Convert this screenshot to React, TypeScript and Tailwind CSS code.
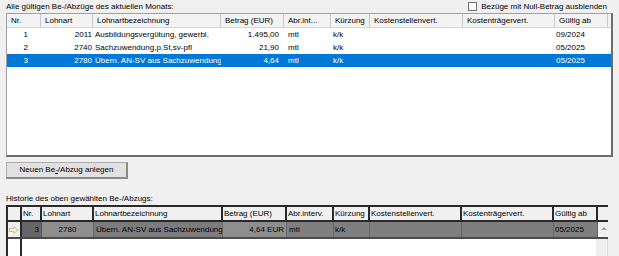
import React from "react";

const font = { fontFamily: '"Liberation Sans", Arial, sans-serif' };

const topCols = [
  { label: "Nr.", w: "w-[34px]" },
  { label: "Lohnart", w: "w-[52px]" },
  { label: "Lohnartbezeichnung", w: "w-[128px]" },
  { label: "Betrag (EUR)", w: "w-[63px]" },
  { label: "Abr.int...", w: "w-[47px]" },
  { label: "Kürzung", w: "w-[39px]" },
  { label: "Kostenstellenvert.", w: "w-[93px]" },
  { label: "Kostenträgervert.", w: "w-[92px]" },
  { label: "Gültig ab", w: "w-[53px]" },
];

const rows = [
  { nr: "1", la: "2011", bez: "Ausbildungsvergütung, gewerbl.", betrag: "1.495,00", abr: "mtl", kz: "k/k", ab: "09/2024" },
  { nr: "2", la: "2740", bez: "Sachzuwendung,p.St,sv-pfl", betrag: "21,90", abr: "mtl", kz: "k/k", ab: "05/2025" },
  { nr: "3", la: "2780", bez: "Übern. AN-SV aus Sachzuwendung", betrag: "4,64", abr: "mtl", kz: "k/k", ab: "05/2025" },
];

function TopTable() {
  return (
    <div className="mx-[6px] mt-[2px] h-[144px] border-l border-t border-[#a0a0a0] border-r-2 border-b-2 border-r-[#6d6d6d] border-b-[#6d6d6d] bg-white overflow-hidden">
      <div className="flex h-[14px] bg-[#f3f3f3] border-b border-[#d5d5d5]">
        {topCols.map((c) => (
          <div key={c.label} className={`${c.w} shrink-0 h-full pl-[4px] border-r border-[#c8c8c8] leading-[13px] whitespace-nowrap overflow-hidden`}>
            {c.label}
          </div>
        ))}
      </div>
      {rows.map((r, i) => {
        const sel = i === 2;
        return (
          <div key={r.nr} className={`flex h-[13px] leading-[13px] whitespace-nowrap ${sel ? "bg-[#0078d7] text-white" : "text-black"}`}>
            <div className="w-[34px] shrink-0 text-right pr-[13px]">{r.nr}</div>
            <div className="w-[52px] shrink-0 text-right pr-[1px]">{r.la}</div>
            <div className="w-[128px] shrink-0 pl-[2px] overflow-hidden">{r.bez}</div>
            <div className="w-[63px] shrink-0 text-right pr-[5px]">{r.betrag}</div>
            <div className="w-[47px] shrink-0 pl-[4px]">{r.abr}</div>
            <div className="w-[39px] shrink-0 pl-[2px]">{r.kz}</div>
            <div className="w-[93px] shrink-0" />
            <div className="w-[92px] shrink-0" />
            <div className="w-[53px] shrink-0 pl-[1px]">{r.ab}</div>
          </div>
        );
      })}
    </div>
  );
}

const botCols = [
  { label: "", w: "w-[14px]" },
  { label: "Nr.", w: "w-[20px]" },
  { label: "Lohnart", w: "w-[52px]" },
  { label: "Lohnartbezeichnung", w: "w-[129px]" },
  { label: "Betrag (EUR)", w: "w-[64px]" },
  { label: "Abr.interv.", w: "w-[47px]" },
  { label: "Kürzung", w: "w-[36px]" },
  { label: "Kostenstellenvert.", w: "w-[92px]" },
  { label: "Kostenträgervert.", w: "w-[92px]" },
  { label: "Gültig ab", w: "w-[44px]" },
  { label: "", w: "w-[12px]" },
];

function HistoryTable() {
  return (
    <div className="mx-[6px] w-[602px] h-[60px] border-l-2 border-t-2 border-[#2a2a2a] bg-white overflow-hidden">
      <div className="flex h-[15px] bg-[#f0f0f0] border-b-2 border-[#2a2a2a]">
        {botCols.map((c, i) => (
          <div key={i} className={`${c.w} shrink-0 h-full pl-[1px] border-r-2 border-[#2a2a2a] leading-[14px] whitespace-nowrap overflow-hidden`}>
            {c.label}
          </div>
        ))}
      </div>
      <div className="flex h-[17px] leading-[16px] whitespace-nowrap text-black border-b-2 border-[#4a4a4a]">
        <div className="w-[14px] shrink-0 bg-[#f0f0f0] border-r-2 border-[#2a2a2a] flex items-center justify-center">
          <svg width="10" height="8" viewBox="0 0 10 8">
            <path d="M0.5 2.5 H5 V0.8 L9 4 L5 7.2 V5.5 H0.5 Z" fill="#fff6c8" stroke="#b8b08a" strokeWidth="0.8" />
          </svg>
        </div>
        <div className="w-[20px] shrink-0 bg-[#666666] border-r border-[#555] text-right pr-[2px]">3</div>
        <div className="w-[52px] shrink-0 bg-[#8e8e8e] border-r border-[#666] text-center">2780</div>
        <div className="w-[129px] shrink-0 bg-[#7c7c7c] border-r border-[#666] pl-[2px] overflow-hidden">Übern. AN-SV aus Sachzuwendung</div>
        <div className="w-[64px] shrink-0 bg-[#8e8e8e] border-r border-[#666] text-right pr-[2px]">4,64 EUR</div>
        <div className="w-[47px] shrink-0 bg-[#7f7f7f] border-r border-[#666] pl-[2px]">mtl</div>
        <div className="w-[36px] shrink-0 bg-[#7f7f7f] border-r border-[#666] pl-[1px]">k/k</div>
        <div className="w-[92px] shrink-0 bg-[#7f7f7f] border-r border-[#666]" />
        <div className="w-[92px] shrink-0 bg-[#7d7d7d] border-r border-[#666]" />
        <div className="w-[44px] shrink-0 bg-[#7f7f7f] border-r border-[#666] pl-[1px]">05/2025</div>
        <div className="w-[12px] shrink-0 bg-[#f0f0f0] flex items-start justify-center pt-[4px]">
          <svg width="6" height="4" viewBox="0 0 6 4">
            <path d="M0 4 L3 1 L6 4 Z" fill="#a0a0a0" />
          </svg>
        </div>
      </div>
      <div className="flex h-[30px]">
        <div className="w-[14px] shrink-0 border-r-2 border-[#2a2a2a]" />
        <div className="flex-1" />
        <div className="w-[12px] shrink-0 bg-[#f0f0f0] border-r border-[#dcdcdc]" />
      </div>
    </div>
  );
}

export default function App() {
  return (
    <div className="w-[619px] h-[256px] bg-[#f0f0f0] text-[8px] text-black overflow-hidden" style={font}>
      <div className="flex items-center justify-between h-[11px] pl-[6px] pr-[12px] pt-[2px]">
        <span>Alle gültigen Be-/Abzüge des aktuellen Monats:</span>
        <label className="flex items-center gap-[4px]">
          <span className="w-[9px] h-[9px] border border-[#707070] bg-white" />
          <span>Bezüge mit Null-Betrag ausblenden</span>
        </label>
      </div>
      <TopTable />
      <div className="px-[6px] pt-[5px]">
        <button className="w-[122px] h-[17px] bg-[#e1e1e1] border border-[#adadad] border-r-2 border-b-2 border-r-[#8a8a8a] border-b-[#8a8a8a] text-[8px] leading-[14px]" style={font}>
          Neuen Be<u>-</u>/Abzug anlegen
        </button>
      </div>
      <div className="pl-[6px] pt-[14px] h-[26px] leading-[12px]">Historie des oben gewählten Be-/Abzugs:</div>
      <HistoryTable />
    </div>
  );
}
